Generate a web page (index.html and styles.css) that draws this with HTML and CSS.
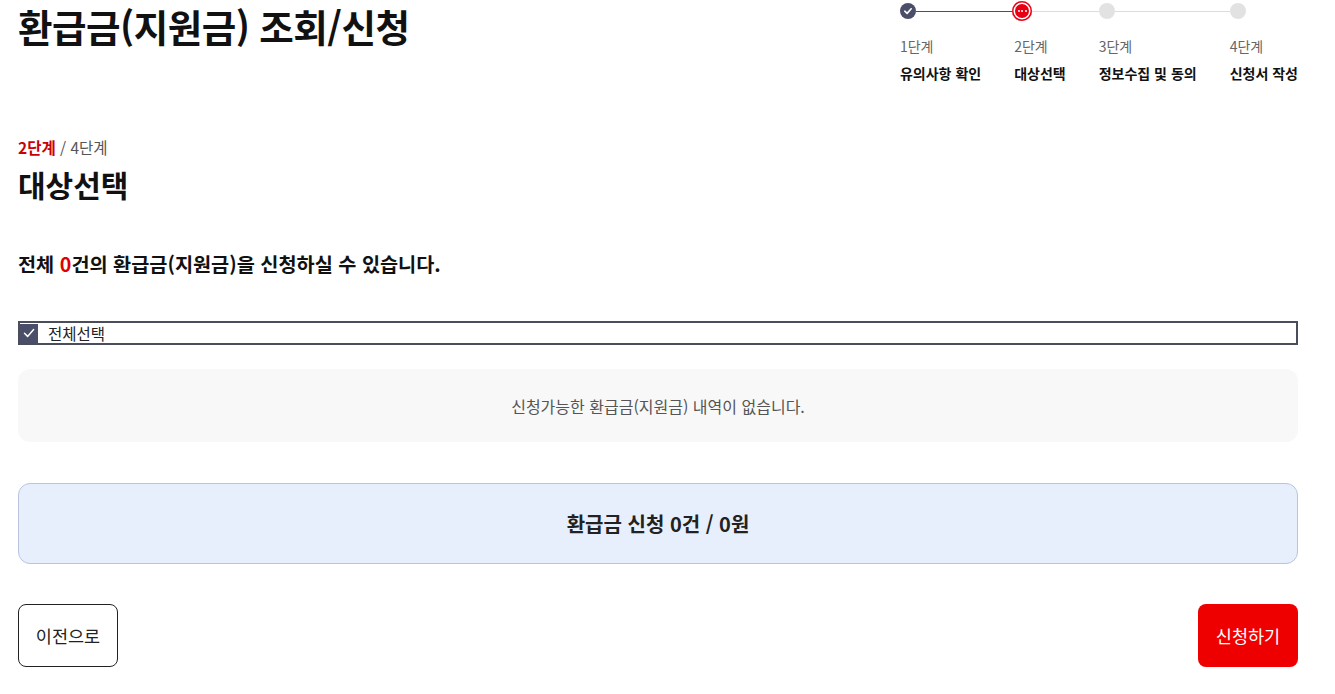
FILE: index.html
```html
<!DOCTYPE html>
<html lang="ko">
<head>
<meta charset="utf-8">
<title>환급금(지원금) 조회/신청</title>
<link rel="stylesheet" href="styles.css">
</head>
<body>
<div class="page">
  <header class="header">
    <h1 class="title">환급금(지원금) 조회/신청</h1>
    <ol class="stepper">
      <li class="step done">
        <div class="track">
          <span class="dot">
            <svg viewBox="0 0 16 16" width="16" height="16"><path d="M4.8 8.2 L7.1 10.4 L11.2 5.8" fill="none" stroke="#fff" stroke-width="1.6" stroke-linecap="round" stroke-linejoin="round"/></svg>
          </span>
          <span class="line"></span>
        </div>
        <span class="step-num">1단계</span>
        <span class="step-name">유의사항 확인</span>
      </li>
      <li class="step current">
        <div class="track">
          <span class="dot"><i></i><i></i><i></i></span>
          <span class="line"></span>
        </div>
        <span class="step-num">2단계</span>
        <span class="step-name">대상선택</span>
      </li>
      <li class="step">
        <div class="track">
          <span class="dot"></span>
          <span class="line"></span>
        </div>
        <span class="step-num">3단계</span>
        <span class="step-name">정보수집 및 동의</span>
      </li>
      <li class="step last">
        <div class="track">
          <span class="dot"></span>
        </div>
        <span class="step-num">4단계</span>
        <span class="step-name">신청서 작성</span>
      </li>
    </ol>
  </header>

  <section class="content">
    <p class="progress"><strong>2단계</strong> / 4단계</p>
    <h2 class="section-title">대상선택</h2>
    <p class="summary-text">전체 <em>0</em>건의 환급금(지원금)을 신청하실 수 있습니다.</p>

    <label class="check-all">
      <span class="checkbox">
        <svg viewBox="0 0 18 18" width="18" height="18"><path d="M4.5 9.3 L7.6 12.4 L13.6 5.6" fill="none" stroke="#fff" stroke-width="1.5" stroke-linecap="round" stroke-linejoin="round"/></svg>
      </span>
      <span class="check-label">전체선택</span>
    </label>

    <div class="empty">신청가능한 환급금(지원금) 내역이 없습니다.</div>

    <div class="total">환급금 신청 0건 / 0원</div>

    <div class="actions">
      <button class="btn btn-prev" type="button">이전으로</button>
      <button class="btn btn-apply" type="button">신청하기</button>
    </div>
  </section>
</div>
</body>
</html>
```

FILE: styles.css
```css
* { box-sizing: border-box; }
html, body { margin: 0; padding: 0; background: #fff; }
body {
  font-family: "Noto Sans CJK KR", "Noto Sans", sans-serif;
  color: #111;
}
.page {
  width: 1280px;
  margin-left: 18px;
}
.header {
  display: flex;
  justify-content: space-between;
  align-items: flex-start;
}
.title {
  margin: 0;
  font-size: 37.5px;
  font-weight: 700;
  line-height: 54px;
  letter-spacing: -0.5px;
  color: #111;
  transform: translateY(-1px);
}
.stepper {
  list-style: none;
  margin: 0;
  padding: 0;
  display: flex;
  gap: 33px;
}
.step {
  display: flex;
  flex-direction: column;
}
.track {
  display: flex;
  align-items: center;
  height: 22px;
  margin-right: -33px;
}
.step.last .track { margin-right: 0; }
.dot {
  flex: none;
  width: 16px;
  height: 16px;
  border-radius: 50%;
  background: #e2e2e2;
  display: flex;
  align-items: center;
  justify-content: center;
  gap: 1.5px;
}
.step.done .dot { background: #4b4e68; }
.step.current .dot {
  width: 20px;
  height: 20px;
  margin-left: -2px;
  background: #e60012;
  box-shadow: inset 0 0 0 1.5px #e60012, inset 0 0 0 3px #fff;
}
.step.current .dot i {
  display: block;
  width: 2px;
  height: 2px;
  border-radius: 50%;
  background: #fff;
}
.line {
  flex: 1;
  height: 1px;
  background: #ddd;
}
.step.done .line { background: #4b4e68; }
.step-num {
  margin-top: 14px;
  font-size: 14px;
  line-height: 20px;
  color: #666;
}
.step-name {
  margin-top: 7px;
  font-size: 14px;
  line-height: 20px;
  font-weight: 700;
  color: #111;
}
.content { padding-top: 54px; }
.progress {
  margin: 0;
  font-size: 15.5px;
  line-height: 20px;
  color: #555;
}
.progress strong { color: #c8000a; font-weight: 700; }
.section-title {
  margin: 7px 0 0;
  font-size: 30px;
  line-height: 40px;
  font-weight: 700;
}
.summary-text {
  margin: 46px 0 0;
  font-size: 19.7px;
  line-height: 28px;
  font-weight: 700;
}
.summary-text em { font-style: normal; color: #e00000; }
.check-all {
  margin-top: 43px;
  display: flex;
  align-items: center;
  gap: 10px;
  height: 24px;
  border: 2px solid #4a4d5c;
}
.checkbox {
  width: 18px;
  height: 19px;
  background: #4b4e68;
  display: flex;
  align-items: center;
  justify-content: center;
}
.check-label {
  font-size: 15.5px;
  line-height: 20px;
  color: #222;
}
.empty {
  margin-top: 24px;
  height: 73px;
  border-radius: 12px;
  background: #f8f8f8;
  display: flex;
  align-items: center;
  justify-content: center;
  font-size: 16px;
  color: #555;
}
.total {
  margin-top: 41px;
  height: 81px;
  border: 1px solid #b8c5e0;
  border-radius: 12px;
  background: #e8effc;
  display: flex;
  align-items: center;
  justify-content: center;
  font-size: 20px;
  font-weight: 700;
  color: #222;
}
.actions {
  margin-top: 40px;
  display: flex;
  justify-content: space-between;
}
.btn {
  width: 100px;
  height: 63px;
  border-radius: 8px;
  font-family: inherit;
  font-size: 17.5px;
  cursor: pointer;
}
.btn-prev {
  background: #fff;
  border: 1px solid #222;
  color: #222;
}
.btn-apply {
  background: #ee0000;
  border: none;
  color: #fff;
}
```
